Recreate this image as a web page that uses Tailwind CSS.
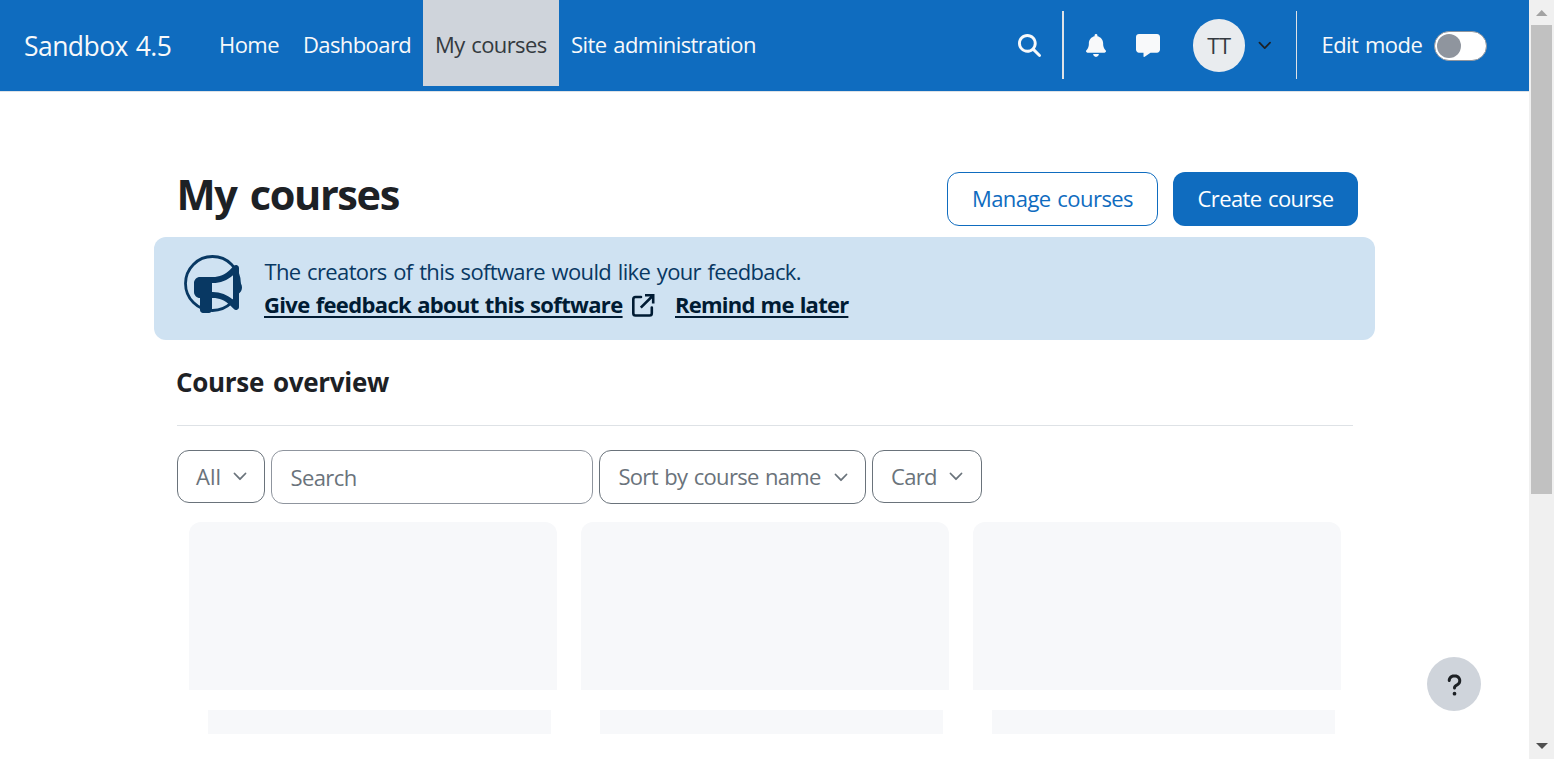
<!DOCTYPE html>
<html lang="en">
<head>
<meta charset="utf-8">
<title>My courses | Sandbox 4.5</title>
<script src="https://cdn.jsdelivr.net/npm/@tailwindcss/browser@4"></script>
</head>
<body class="flex h-[759px] overflow-hidden bg-white font-['Open_Sans',sans-serif] text-[22px] text-[#1d2125] [word-spacing:1.5px]">
<svg class="hidden"><symbol id="chev" viewBox="0 0 14 9"><path d="M1.500 1.500 7 7.200l5.500-5.700" fill="none" stroke="currentColor" stroke-width="1.800" stroke-linecap="round" stroke-linejoin="round"/></symbol></svg>

<div class="relative flex min-w-0 flex-1 flex-col">
  <header class="flex h-[92px] shrink-0 border-b border-[#dee2e6] bg-[#0f6cbf] text-[#f8f9fa]">
    <a class="flex h-[91px] w-[207px] items-center pt-[2px] pl-6 text-[26.500px] tracking-[-0.560px] whitespace-nowrap">Sandbox 4.5</a>
    <nav class="flex h-[86px] whitespace-nowrap">
      <a class="flex w-[84px] items-center pt-[3px] pl-3 tracking-[-0.550px]">Home</a>
      <a class="flex w-[132px] items-center pt-[3px] pl-3 tracking-[-0.600px]">Dashboard</a>
      <a class="flex w-[136px] items-center bg-[#cfd4db] pt-[3px] pl-3 tracking-[-0.600px] text-[#343a40]">My courses</a>
      <a class="flex w-[210px] items-center pt-[3px] pl-3 tracking-[-0.550px]">Site administration</a>
    </nav>
    <div class="ml-auto flex h-[90px] items-center">
      <svg class="mr-[21px] size-[23px]" viewBox="0 0 512 512" fill="currentColor"><path d="M416 208c0 45.900-14.900 88.300-40 122.700L502.600 457.400c12.500 12.500 12.500 32.800 0 45.300s-32.800 12.500-45.300 0L330.700 376c-34.400 25.200-76.800 40-122.700 40C93.100 416 0 322.900 0 208S93.100 0 208 0S416 93.100 416 208zM208 352a144 144 0 1 0 0-288 144 144 0 1 0 0 288z"/></svg>
      <div class="mr-[22px] h-[68px] w-0.5 bg-[#dee2e6]"></div>
      <svg class="mr-[30px] h-[23px] w-5" viewBox="0 0 448 512" fill="currentColor"><path d="M224 0c-17.700 0-32 14.300-32 32V51.200C119 66 64 130.600 64 208v18.800c0 47-17.300 92.400-48.500 127.600l-7.400 8.300c-8.400 9.400-10.400 22.900-5.300 34.400S19.400 416 32 416H416c12.600 0 24-7.400 29.200-18.900s3.100-25-5.300-34.400l-7.400-8.300C401.300 319.200 384 273.900 384 226.800V208c0-77.400-55-142-128-156.800V32c0-17.700-14.300-32-32-32zm45.300 493.300c12-12 18.700-28.300 18.700-45.300H224 160c0 17 6.700 33.300 18.700 45.300s28.300 18.700 45.300 18.700s33.300-6.700 45.300-18.700z"/></svg>
      <svg class="mr-[33px] h-[23px] w-6" viewBox="0 0 512 512" preserveAspectRatio="none" fill="currentColor"><path d="M64 0C28.700 0 0 28.700 0 64V352c0 35.300 28.700 64 64 64h96v80c0 6.100 3.400 11.600 8.800 14.300s11.900 2.100 16.800-1.500L309.300 416H448c35.300 0 64-28.700 64-64V64c0-35.300-28.700-64-64-64H64z"/></svg>
      <div class="mt-px flex h-[53px] w-[52px] items-center justify-center rounded-full bg-[#e9ecef] pb-px tracking-[-0.300px] text-[#343a40]">TT</div>
      <svg class="mr-[25px] ml-[12.500px] h-[9px] w-[13.500px] text-[#1d2125]"><use href="#chev"/></svg>
      <div class="h-[68px] w-px bg-[#dee2e6]"></div>
      <span class="w-[137px] pb-px pl-[24.500px] tracking-[-0.550px] whitespace-nowrap">Edit mode</span>
      <div class="mt-0.5 mr-[42px] flex h-[30px] w-[53px] items-center rounded-full border border-[#8f959e] bg-white pl-0.5"><div class="size-6 rounded-full bg-[#8f959e]"></div></div>
    </div>
  </header>

  <main class="ml-[154px] flex w-[1221px] flex-col pt-20">
    <div class="flex h-[54px] justify-between pr-[17px] pl-[22.500px] whitespace-nowrap">
      <h1 class="text-[41.500px] leading-[44px] font-bold tracking-[-1.400px] [word-spacing:4px]">My courses</h1>
      <div class="flex gap-[15px]">
        <button class="w-[211px] rounded-xl border border-[#0f6cbf] pb-px tracking-[-0.550px] text-[#0f6cbf] [word-spacing:1.500px]">Manage courses</button>
        <button class="w-[185px] rounded-xl bg-[#0f6cbf] pb-px tracking-[-0.620px] text-white [word-spacing:1.500px]">Create course</button>
      </div>
    </div>

    <section class="mt-[11px] flex h-[103px] rounded-xl bg-[#cfe2f2] pt-[18px] pl-[29px] text-[#083863]">
      <svg class="h-[60px] w-[60px]" viewBox="0 0 60 60"><circle cx="29.500" cy="28.500" r="27" fill="none" stroke="currentColor" stroke-width="2.800"/><g transform="translate(11 10) scale(.09375)"><path fill="currentColor" d="M480 32c0-12.900-7.800-24.600-19.800-29.600s-25.700-2.200-34.900 6.900L381.700 53c-48 48-113.100 75-181 75H192 160 64c-35.300 0-64 28.700-64 64v96c0 35.300 28.700 64 64 64l0 128c0 17.700 14.300 32 32 32h64c17.700 0 32-14.300 32-32V352l8.700 0c67.900 0 133 27 181 75l43.600 43.600c9.200 9.200 22.900 11.900 34.900 6.900s19.800-16.600 19.800-29.600V300.400c18.600-8.800 32-32.500 32-60.400s-13.400-51.600-32-60.400V32zm-64 76.700V240 371.300C357.200 317.800 280.500 288 200.700 288H192V192h8.700c79.800 0 156.500-29.800 215.300-83.300z"/></g></svg>
      <div class="ml-[21px] leading-[33px] whitespace-nowrap">
        <p class="pl-[0.500px] tracking-[-0.640px]">The creators of this software would like your feedback.</p>
        <p class="flex items-center font-bold text-[#001b33] [word-spacing:1px]">
          <a class="w-[358.500px] tracking-[-0.645px] underline decoration-2 underline-offset-[3px]">Give feedback about this software</a>
          <svg class="mr-[20.500px] ml-[8px] size-6" viewBox="0 0 24 24" fill="none" stroke="currentColor" stroke-width="2.600"><path d="M10 4H4.500Q2.300 4 2.300 6.200V20.300Q2.300 22.500 4.500 22.500H18.600Q20.800 22.500 20.800 20.300V14.500" stroke-linecap="round"/><path d="M14 2.300H22.200V10.500M22 2.500 9.800 14.700"/></svg>
          <a class="tracking-[-0.760px] underline decoration-2 underline-offset-[3px]">Remind me later</a>
        </p>
      </div>
    </section>

    <section class="ml-[23px] w-[1176px] pt-[22px]">
      <h2 class="-ml-px h-[63px] text-[26px] leading-10 font-bold tracking-[-0.300px] [word-spacing:2.500px]">Course overview</h2>
      <hr class="border-t border-[#dee2e6]">
      <div class="mt-6 flex items-start gap-1.5 whitespace-nowrap text-[#6a737b]">
        <button class="flex h-[53px] w-[88px] items-center rounded-xl border border-[#6a737b] pl-[18px]">All<svg class="mr-[17px] ml-auto h-[9px] w-[14px]"><use href="#chev"/></svg></button>
        <input class="h-[54px] w-[322px] rounded-xl border border-[#8f959e] pl-[18.500px] tracking-[-0.600px] placeholder:text-[#6a737b]" placeholder="Search">
        <button class="flex h-[54px] w-[267px] items-center rounded-xl border border-[#6a737b] pb-px pl-[18.500px] tracking-[-0.720px] [word-spacing:1.500px]">Sort by course name<svg class="mr-[17.500px] ml-auto h-[9px] w-[14px] translate-y-px"><use href="#chev"/></svg></button>
        <button class="flex h-[53px] w-[110px] items-center rounded-xl border border-[#6a737b] pl-[18px] tracking-[-0.700px]">Card<svg class="mr-[18px] ml-auto h-[9px] w-[14px]"><use href="#chev"/></svg></button>
      </div>
      <div class="mt-[18px] ml-3 grid w-[1152px] grid-cols-3 gap-6">
        <div><div class="h-[168px] rounded-t-xl bg-[#f7f8fa]"></div><div class="mt-5 mr-1.5 ml-[19px] h-6 bg-[#f7f8fa]"></div></div>
        <div><div class="h-[168px] rounded-t-xl bg-[#f7f8fa]"></div><div class="mt-5 mr-1.5 ml-[19px] h-6 bg-[#f7f8fa]"></div></div>
        <div><div class="h-[168px] rounded-t-xl bg-[#f7f8fa]"></div><div class="mt-5 mr-1.5 ml-[19px] h-6 bg-[#f7f8fa]"></div></div>
      </div>
    </section>
  </main>

  <button class="absolute right-12 bottom-12 flex size-[54px] items-center justify-center rounded-full bg-[#cfd4db] pt-0.5" aria-label="Help">
    <svg class="h-6 w-[15px]" viewBox="0 0 320 512" fill="#1d2125"><path d="M80 160c0-35.300 28.700-64 64-64h32c35.300 0 64 28.700 64 64v3.600c0 21.800-11.100 42.100-29.400 53.800l-42.200 27.100c-25.200 16.200-40.400 44.100-40.400 74V320c0 17.700 14.300 32 32 32s32-14.300 32-32v-1.400c0-8.200 4.200-15.800 11-20.200l42.200-27.100c36.600-23.600 58.800-64.100 58.800-107.700V160c0-70.700-57.300-128-128-128H144C73.300 32 16 89.300 16 160c0 17.700 14.300 32 32 32s32-14.300 32-32zm80 320a40 40 0 1 0 0-80 40 40 0 0 0 0 80z"/></svg>
  </button>
</div>

<div class="flex w-[25px] shrink-0 flex-col items-center bg-[#f0f0f0] pb-[10px]">
  <svg class="h-[25px] w-[25px]" viewBox="0 0 25 25"><path d="M7 16h11.500L12.700 10z" fill="#a3a3a3"/></svg>
  <div class="h-[469px] w-[21px] bg-[#c1c1c1]"></div>
  <svg class="mt-auto h-1.5 w-3" viewBox="0 0 12 6"><path d="M0 0h12L6 6z" fill="#505050"/></svg>
</div>
</body>
</html>
